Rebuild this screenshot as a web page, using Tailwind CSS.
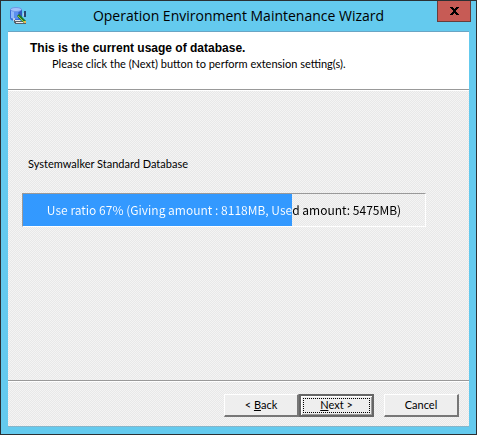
<!DOCTYPE html>
<html lang="en">
<head>
  <meta charset="UTF-8" />
  <meta name="viewport" content="width=device-width, initial-scale=1.0" />
  <title>Operation Environment Maintenance Wizard</title>
  <script src="https://cdn.jsdelivr.net/npm/@tailwindcss/browser@4"></script>
</head>
<body class="min-h-screen flex flex-col bg-[#64caee] border border-[#2b3033] font-[Lato,sans-serif] text-[11px] text-black">
  <header class="relative h-[30px] shrink-0 flex items-center justify-center">
    <svg class="absolute left-2 top-1" width="20" height="20" viewBox="0 0 20 20" aria-hidden="true">
      <path d="M1 4v9c0 2 2 3 6 3s6-1 6-3V4z" fill="#3b6fd8" />
      <path d="M2 5v8l3 1V6z" fill="#8fb8f8" />
      <path d="M5 6v8h4V6z" fill="#5b8fee" />
      <path d="M10 6v8l3-1V4z" fill="#3158bc" />
      <ellipse cx="7" cy="4.500" rx="5.500" ry="2" fill="#a4c2fa" stroke="#6f98e8" />
      <path d="M15 6h2v6h-2z" fill="#29456f" />
      <path d="M14 8h1v3h-1zM4 13h2v3H4z" fill="#b8cbe0" />
      <path d="M5 15h6v1h6v3H6v-1H5z" fill="#59616a" />
      <path d="M6 15h5v1H6zM7 17h8v1H7z" fill="#e9eaec" />
      <path d="M9 10l7 7" stroke="#207c27" stroke-width="3" />
      <path d="M9 11l6 6" stroke="#a5c936" />
      <path d="M15 16h2v2h-2z" fill="#edb44e" />
    </svg>
    <h1 class="font-['Open_Sans',sans-serif] text-sm">Operation Environment Maintenance Wizard</h1>
    <button type="button" aria-label="Close" class="absolute right-[5px] top-0 w-[34px] h-[21px] flex items-center justify-center bg-[#c75b55] border border-t-0 border-[#663d3c]">
      <svg width="9" height="8" viewBox="0 0 9 8" shape-rendering="crispEdges" aria-hidden="true">
        <path d="M0 0h3v1h1v1h1V1h1V0h3v1H8v1H7v1H6v2h1v1h1v1h1v1H6V7H5V6H4v1H3v1H0V7h1V6h1V5h1V3H2V2H1V1H0z" fill="#000" />
      </svg>
    </button>
  </header>

  <main class="grow mx-[7px] mb-[7px] flex flex-col border-t border-b border-t-[#6aa5c4] border-b-[#84b5ca] bg-[repeating-conic-gradient(#e8e8e8_0_25%,#f4f4f4_0_50%)] bg-[length:2px_2px]">
    <section class="h-[58px] shrink-0 bg-white border-b border-[#999999] pl-[22px] pt-2">
      <h2 class="font-['Liberation_Sans',sans-serif] text-xs font-bold leading-4">This is the current usage of database.</h2>
      <p class="pl-[22px] leading-[15px]">Please click the (Next) button to perform extension setting(s).</p>
    </section>

    <section class="grow pt-[65px] pl-[14px] pr-[43px] border-t border-white">
      <p id="db-name" class="pl-[6px] leading-4">Systemwalker Standard Database</p>
      <div role="progressbar" aria-labelledby="db-name" aria-valuenow="67" aria-valuemin="0" aria-valuemax="100"
        class="relative mt-[21px] h-[34px] border border-t-[#999999] border-l-[#999999] border-r-white border-b-white">
        <div class="h-full bg-[#3399ff]" style="width: 67%"></div>
        <p class="absolute inset-0 flex items-center justify-center whitespace-nowrap font-['Noto_Sans_CJK_JP',sans-serif] text-xs text-transparent bg-clip-text bg-linear-to-r from-white from-67% to-black to-67%">Use ratio 67% (Giving amount : 8118MB, Used amount: 5475MB)</p>
      </div>
    </section>

    <footer class="h-[46px] shrink-0 flex items-start justify-end pt-[13px] pr-[10px] border-t border-[#999999] shadow-[inset_0_1px_0_#ffffff]">
      <button type="button" class="w-[75px] h-[23px] bg-[#eeeeee] border-t border-l border-white border-r-2 border-b-2 border-r-[#777777] border-b-[#777777]">&lt; <u>B</u>ack</button>
      <button type="button" class="w-[75px] h-[23px] p-[2px] bg-[#eeeeee] border-2 border-[#666666] shadow-[inset_1px_1px_0_#ffffff,inset_-1px_-1px_0_#999999]">
        <span class="flex h-full items-center justify-center border border-dotted border-black"><span><u>N</u>ext &gt;</span></span>
      </button>
      <button type="button" class="ml-[10px] w-[75px] h-[23px] bg-[#eeeeee] border-t border-l border-white border-r-2 border-b-2 border-r-[#777777] border-b-[#777777]">Cancel</button>
    </footer>
  </main>
</body>
</html>
